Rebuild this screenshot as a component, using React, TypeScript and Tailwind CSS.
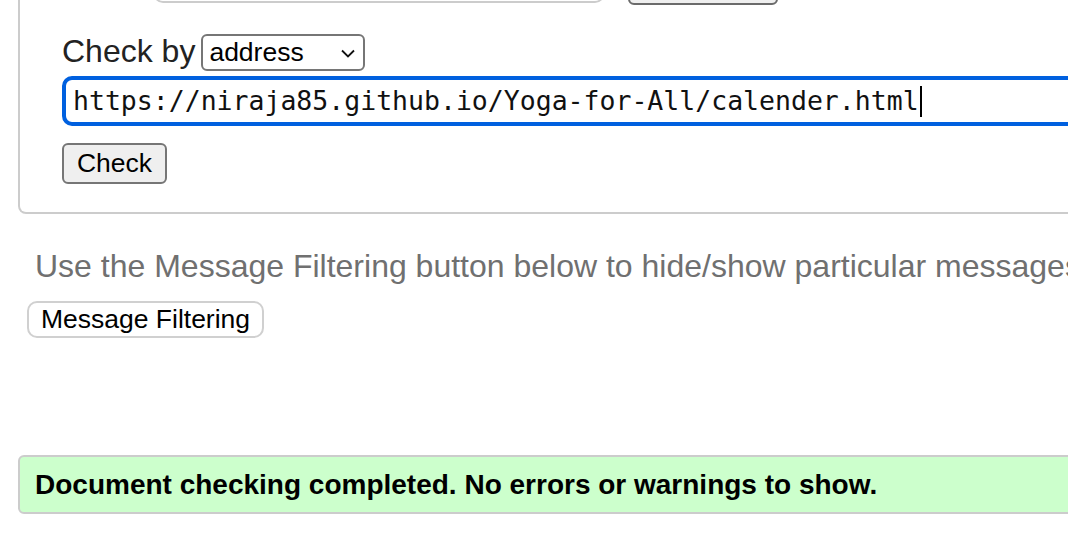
import React from 'react';

const sans = { fontFamily: '"Liberation Sans", Arial, sans-serif' };

const App: React.FC = () => {
    return (
        <div className="w-[1068px] h-[542px] overflow-hidden bg-white text-black" style={sans}>
            <div className="w-[1300px]">
                {/* form fieldset, top part scrolled out of view */}
                <div className="ml-[18px] w-[1200px] border-x-2 border-b-2 border-[#cccccc] rounded-b-[8px] pl-[42px] pb-[28px]">
                    <div className="flex items-end h-[45px] -mt-[40px]">
                        <div className="ml-[91px] mb-[2px] w-[452px] h-[40px] border-2 border-[#cccccc] rounded-[10px] bg-white" />
                        <div className="ml-[23px] w-[150px] h-[42px] border-2 border-[#6b6b6b] rounded-[6px] bg-[#efefef]" />
                    </div>

                    <div className="flex items-center mt-[29px] h-[37px]">
                        <span className="text-[32px] leading-[37px] text-[#222] -mt-[3px]">Check by</span>
                        <div className="ml-[6px] w-[164px] h-[37px] border-2 border-[#767676] rounded-[6px] bg-white flex items-center justify-between pl-[6px] pr-[8px]">
                            <span className="text-[26.5px] leading-none">address</span>
                            <svg width="14" height="9" viewBox="0 0 14 9" className="mt-[2px]">
                                <path d="M1 1.5 L7 7.5 L13 1.5" fill="none" stroke="#111" strokeWidth="1.8" />
                            </svg>
                        </div>
                    </div>

                    <div className="mt-[5px] w-[1100px] h-[50px] border-[4px] border-[#0060df] rounded-[10px] bg-white flex items-center pl-[7px]">
                        <span
                            className="text-[26.5px] leading-none text-[#111]"
                            style={{ fontFamily: '"DejaVu Sans Mono", monospace' }}
                        >
                            https://niraja85.github.io/Yoga-for-All/calender.html
                        </span>
                        <span className="ml-[1px] w-[2px] h-[31px] bg-black" />
                    </div>

                    <button className="mt-[17px] w-[105px] h-[41px] border-2 border-[#767676] rounded-[6px] bg-[#efefef] text-[26.5px] leading-none text-black flex items-center justify-center">
                        Check
                    </button>
                </div>

                <p className="ml-[35px] mt-[34px] text-[32px] leading-[37px] text-[#707070] whitespace-nowrap">
                    Use the Message Filtering button below to hide/show particular messages, and to see total counts of errors and warnings.
                </p>

                <button className="ml-[27px] mt-[16px] w-[237px] h-[37px] border-2 border-[#d0d0d0] rounded-[10px] bg-white text-[26.5px] leading-none text-black flex items-center justify-center">
                    Message Filtering
                </button>

                <div className="ml-[18px] mt-[117px] w-[1200px] h-[59px] border-2 border-[#cccccc] rounded-[6px] bg-[#ccffcc] flex items-center pl-[15px]">
                    <span className="text-[28px] font-bold leading-none text-black">
                        Document checking completed. No errors or warnings to show.
                    </span>
                </div>
            </div>
        </div>
    );
};

export default App;
